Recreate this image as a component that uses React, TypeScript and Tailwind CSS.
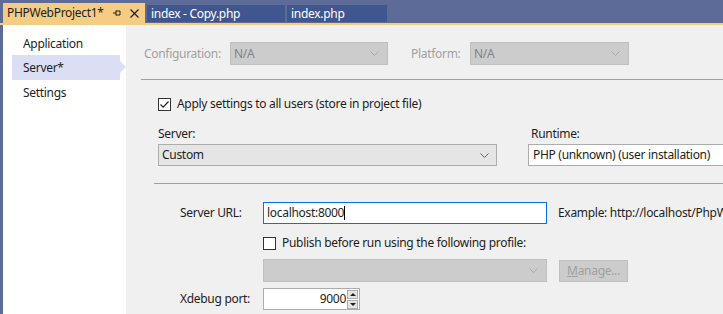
import React from "react";

const Chevron = ({ color = "#606060" }: { color?: string }) => (
  <svg width="9" height="5" viewBox="0 0 9 5" className="shrink-0">
    <path d="M0.5 0.5 L4.5 4.5 L8.5 0.5" fill="none" stroke={color} strokeWidth="1" />
  </svg>
);

const CheckBox = ({ checked }: { checked?: boolean }) => (
  <div className="w-[13px] h-[13px] border border-[#333333] bg-white flex items-center justify-center shrink-0">
    {checked && (
      <svg width="11" height="11" viewBox="0 0 11 11">
        <path d="M1.5 5.5 L4.2 8.2 L9.5 2.5" fill="none" stroke="#222222" strokeWidth="1.2" />
      </svg>
    )}
  </div>
);

const DisabledSelect = ({ value, width }: { value?: string; width: string }) => (
  <div
    className={`${width} h-[23px] shrink-0 bg-[#cccccc] border border-[#bfbfbf] flex items-center justify-between pl-[3px] pr-[8px] text-[#838383]`}
  >
    <span>{value}</span>
    <Chevron color="#a9a9a9" />
  </div>
);

const App = () => {
  return (
    <div
      className="w-[723px] h-[314px] overflow-hidden flex flex-col bg-[#f0f0f0] text-[12px] leading-[16px] tracking-[-0.3px] text-[#1e1e1e]"
      style={{ fontFamily: '"Segoe UI", "Noto Sans", sans-serif' }}
    >
      {/* tab strip */}
      <div className="h-[25px] bg-[#5d6b99] flex flex-col shrink-0">
        <div className="h-[23px] flex items-end pl-[3px] gap-[2px]">
          <div className="h-[20px] w-[142px] shrink-0 bg-[#f5cc84] flex items-center pl-[4px] pr-[6px] text-[#1e1e1e]">
            <span className="flex-1">PHPWebProject1*</span>
            <svg width="10" height="10" viewBox="0 0 10 10" className="mr-[8px]">
              <path d="M1 5 H4 M4 2.5 V7.5 M4 3 H8 V7 H4" fill="none" stroke="#1e1e1e" strokeWidth="1" />
            </svg>
            <svg width="9" height="9" viewBox="0 0 9 9">
              <path d="M0.5 0.5 L8.5 8.5 M8.5 0.5 L0.5 8.5" fill="none" stroke="#1e1e1e" strokeWidth="1.2" />
            </svg>
          </div>
          <div className="h-[17px] mb-[1px] w-[138px] shrink-0 bg-[#40568f] flex items-center pl-[4px] text-white">
            index - Copy.php
          </div>
          <div className="h-[17px] mb-[1px] w-[100px] shrink-0 bg-[#40568f] flex items-center pl-[4px] text-white">
            index.php
          </div>
        </div>
        <div className="h-[2px] bg-[#f5cc84]" />
      </div>

      <div className="flex flex-1 min-h-0">
        {/* window edge */}
        <div className="w-[3px] shrink-0 bg-[#5d6b99]" />

        {/* sidebar */}
        <div className="w-[123px] shrink-0 bg-white flex flex-col pt-[8px]">
          <div className="h-[22px] flex items-center pl-[20px]">Application</div>
          <div className="relative h-[25px] w-[108px] ml-[9px] bg-[#dadff6] flex items-center pl-[11px]">
            Server*
            <div className="absolute right-[-6px] top-[6px] w-0 h-0 border-y-[6px] border-y-transparent border-l-[6px] border-l-[#dadff6]" />
          </div>
          <div className="h-[25px] flex items-center pl-[20px]">Settings</div>
        </div>

        {/* content */}
        <div className="flex-1 min-w-0 flex flex-col pt-[17px]">
          <div className="flex items-center pl-[18px]">
            <span className="w-[86px] shrink-0 text-[#a0a0a0]">Configuration:</span>
            <DisabledSelect value="N/A" width="w-[158px]" />
            <span className="w-[59px] shrink-0 ml-[23px] text-[#a0a0a0]">Platform:</span>
            <DisabledSelect value="N/A" width="w-[159px]" />
          </div>

          <div className="h-px bg-[#a0a0a0] ml-[15px] mt-[14px]" />

          <div className="flex items-center gap-[6px] pl-[32px] mt-[16px]">
            <CheckBox checked />
            <span>Apply settings to all users (store in project file)</span>
          </div>

          <div className="flex pl-[32px] mt-[14px]">
            <div className="flex flex-col w-[339px] shrink-0">
              <span className="h-[18px]">Server:</span>
              <div className="h-[22px] bg-[#e5e5e5] border border-[#acacac] flex items-center justify-between pl-[3px] pr-[7px]">
                <span>Custom</span>
                <Chevron />
              </div>
            </div>
            <div className="flex flex-col ml-[31px] w-[240px] shrink-0">
              <span className="h-[18px] pl-[3px]">Runtime:</span>
              <div className="h-[22px] bg-white border border-[#acacac] flex items-center pl-[4px] whitespace-nowrap">
                PHP (unknown) (user installation)
              </div>
            </div>
          </div>

          <div className="h-px bg-[#a0a0a0] ml-[28px] mt-[17px]" />

          <div className="flex items-center mt-[18px] pl-[54px]">
            <span className="w-[83px] shrink-0">Server URL:</span>
            <div className="w-[284px] shrink-0 h-[22px] bg-white border border-[#0078d7] flex items-center pl-[3px]">
              localhost:8000
              <span className="w-px h-[14px] bg-black" />
            </div>
            <span className="ml-[11px] whitespace-nowrap">Example: http://localhost/PhpWebProject1</span>
          </div>

          <div className="flex items-center gap-[6px] pl-[137px] mt-[11px]">
            <CheckBox />
            <span>Publish before run using the following profile:</span>
          </div>

          <div className="flex items-center pl-[137px] mt-[8px]">
            <DisabledSelect width="w-[284px]" />
            <div className="ml-[12px] w-[69px] shrink-0 h-[22px] bg-[#cccccc] border border-[#bfbfbf] flex items-center justify-center text-[#a0a0a0]">
              <span>
                <span className="underline">M</span>anage...
              </span>
            </div>
          </div>

          <div className="flex items-center mt-[6px] pl-[54px]">
            <span className="w-[83px] shrink-0">Xdebug port:</span>
            <div className="w-[97px] shrink-0 h-[22px] bg-white border border-[#acacac] flex items-center justify-end pr-px">
              <span className="mr-[1px]">9000</span>
              <div className="flex flex-col gap-px">
                <div className="w-[11px] h-[9px] bg-[#e5e5e5] border border-[#acacac] flex items-center justify-center">
                  <div className="w-0 h-0 border-x-[3px] border-x-transparent border-b-[3px] border-b-[#1e1e1e]" />
                </div>
                <div className="w-[11px] h-[9px] bg-[#e5e5e5] border border-[#acacac] flex items-center justify-center">
                  <div className="w-0 h-0 border-x-[3px] border-x-transparent border-t-[3px] border-t-[#1e1e1e]" />
                </div>
              </div>
            </div>
          </div>
        </div>
      </div>
    </div>
  );
};

export default App;
